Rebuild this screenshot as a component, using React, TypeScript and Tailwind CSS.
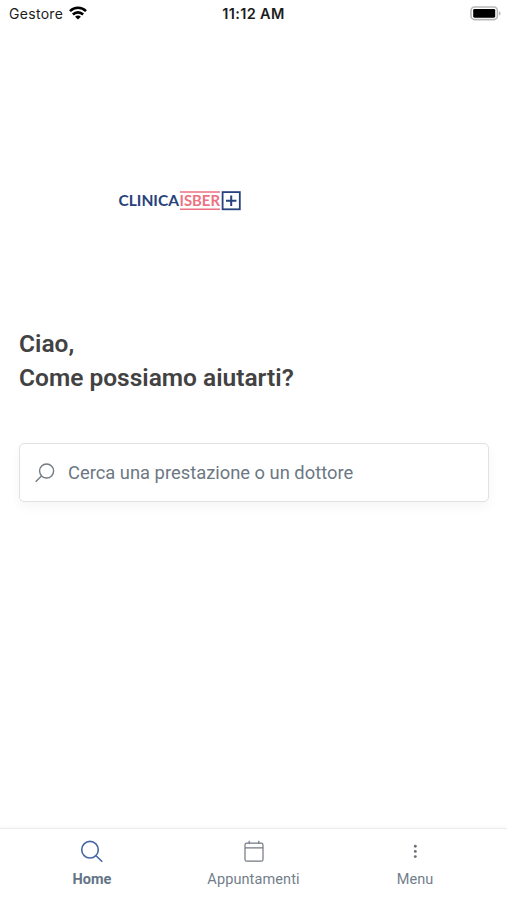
import type { ReactNode } from "react";

function StatusBar() {
  return (
    <header className="grid h-7 grid-cols-3 items-center pl-[9px] pr-[9px] font-['Inter',sans-serif] text-black">
      <div className="flex items-center gap-[6px]">
        <span className="text-[14px] leading-7 tracking-[0.3px] text-[#1c1c1c]">Gestore</span>
        <svg width="18" height="14" viewBox="0 0 18 14" className="-mt-[2px]">
          <g fill="none" stroke="#000" strokeWidth="2.6">
            <path d="M1 5.1a11.4 11.4 0 0 1 16 0" />
            <path d="M3.9 8.5a7.2 7.2 0 0 1 10.2 0" />
          </g>
          <path d="M9 13.6 6.1 10.8a4 4 0 0 1 5.8 0z" />
        </svg>
      </div>
      <span className="text-center text-[14.5px] font-semibold leading-7 tracking-[0.35px] text-[#1c1c1c]">11:12 AM</span>
      <svg width="31" height="15" viewBox="0 0 31 15" className="-mr-[3px] -mt-[2px] justify-self-end">
        <rect x="1" y="1" width="26.4" height="12.6" rx="3.6" fill="#fff" stroke="#b8b8b8" strokeWidth="1.6" />
        <rect x="3.2" y="2.9" width="22" height="8.8" rx="1.4" />
        <path d="M29 5.2c2.2.8 2.2 3.5 0 4.3z" fill="#b8b8b8" />
      </svg>
    </header>
  );
}

function Logo() {
  return (
    <svg width="124" height="22" viewBox="0 0 124 22" role="img" aria-label="Clinica Isber">
      <g fontFamily="Lato, sans-serif" fontSize="14.6" fontWeight="700">
        <text x="0.5" y="15.8" fill="#27427c" textLength="60.5" lengthAdjust="spacingAndGlyphs">
          CLINICA
        </text>
        <text x="61.5" y="15.8" fill="#ed7282" textLength="40.5" lengthAdjust="spacingAndGlyphs">
          ISBER
        </text>
      </g>
      <path d="M62 2h40M62 19.3h40" stroke="#ed7282" strokeWidth="1.6" />
      <g fill="none" stroke="#27427c">
        <rect x="104.6" y="2.1" width="17.2" height="17.2" strokeWidth="1.8" />
        <path d="M108 10.7h10.4M113.2 5.5v10.4" strokeWidth="2" />
      </g>
    </svg>
  );
}

const tabs: { label: string; active?: boolean; icon: ReactNode }[] = [
  {
    label: "Home",
    active: true,
    icon: (
      <g stroke="#4767a3" strokeWidth="1.6">
        <circle cx="10" cy="9.7" r="8.3" />
        <path d="m16 15.7 6.3 6.1" />
      </g>
    ),
  },
  {
    label: "Appuntamenti",
    icon: (
      <g stroke="#727982" strokeWidth="1.2">
        <rect x="3" y="3.2" width="18" height="18" rx="1.8" />
        <path d="M3 7.8h18M7.2.8v3M16.8.8v3" />
      </g>
    ),
  },
  {
    label: "Menu",
    icon: (
      <g fill="#68717b">
        <circle cx="12.3" cy="6.2" r="1.45" />
        <circle cx="12.3" cy="11.4" r="1.45" />
        <circle cx="12.3" cy="16.6" r="1.45" />
      </g>
    ),
  },
];

function TabBar() {
  return (
    <nav className="flex h-[72px] shrink-0 justify-center border-t border-[#ececec] bg-white pt-[11px] shadow-[0_-1px_3px_rgba(0,0,0,0.035)]">
      {tabs.map((tab) => (
        <button key={tab.label} className="flex w-[161.5px] flex-col items-center">
          <svg width="24" height="24" viewBox="0 0 24 24" fill="none">
            {tab.icon}
          </svg>
          <span
            className={
              tab.active
                ? "mt-[6px] text-[14.5px] font-bold leading-5 text-[#647487]"
                : "mt-[6px] text-[14.5px] leading-5 tracking-[0.1px] text-[#727e8b]"
            }
          >
            {tab.label}
          </span>
        </button>
      ))}
    </nav>
  );
}

export default function App() {
  return (
    <div className="flex h-[900px] flex-col overflow-hidden bg-white font-['Roboto',sans-serif]">
      <StatusBar />
      <main className="flex-1">
        <div className="ml-[118px] mt-[162px]">
          <Logo />
        </div>
        <div className="pl-[19px] pr-[18px]">
          <h1 className="mt-[115px] text-[24.5px] font-semibold leading-[34px] text-[#424242]">
            Ciao,
            <br />
            Come possiamo aiutarti?
          </h1>
          <label className="mt-[48px] flex h-[59px] items-center rounded-[5px] border border-[#dfe1e2] bg-white pl-[15px] shadow-[0_5px_12px_rgba(0,0,0,0.04)]">
            <svg width="20" height="20" viewBox="0 0 20 20" fill="none" stroke="#727b82" strokeWidth="1.4">
              <circle cx="11.6" cy="8" r="7" />
              <path d="m6.5 13-5.8 5.7" />
            </svg>
            <input
              type="text"
              placeholder="Cerca una prestazione o un dottore"
              className="ml-[13px] min-w-0 flex-1 text-[18.35px] text-[#6c7883] outline-none placeholder:text-[#6c7883]"
            />
          </label>
        </div>
      </main>
      <TabBar />
    </div>
  );
}
